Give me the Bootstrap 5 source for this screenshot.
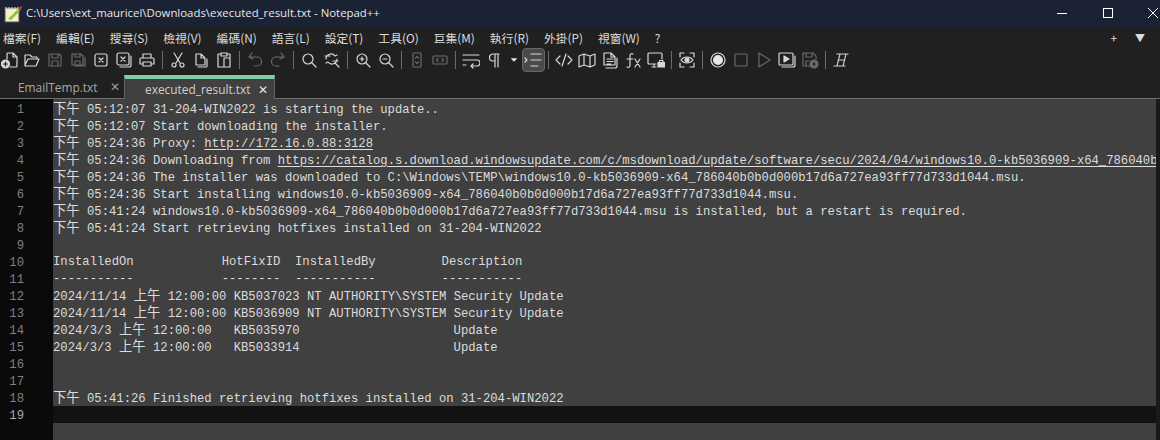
<!DOCTYPE html>
<html lang="zh-Hant"><head><meta charset="utf-8"><title>Notepad++</title>
<link href="https://cdn.jsdelivr.net/npm/bootstrap@5.3.0/dist/css/bootstrap.min.css" rel="stylesheet">
<style>
html,body{height:100%;overflow:hidden;background:#202020}
.np-app{width:1160px;height:440px;font-family:"Noto Sans CJK TC","Open Sans",sans-serif}
.np-title{height:28px;background:#1a2233;color:#e8e8e8;font:11.4px/24px "Open Sans","Noto Sans CJK TC",sans-serif;padding-bottom:3px}
.np-logo{width:26px;padding-left:3px;padding-top:2px}
.np-winbtns{margin-left:auto;margin-right:1px;gap:33.5px}
.np-menu{height:20px;background:#202020;color:#dcdcdc;font:11.8px/19px "Noto Sans CJK TC",sans-serif;padding-left:3px;gap:15px}
.np-plus{margin-right:3px}
.np-drop{margin-right:15px;font-size:10px}
.np-bar{height:24px;background:#202020}
.np-ico{width:23px;height:24px;display:flex;align-items:center;justify-content:center;flex:none}
.np-ico.first{width:20.5px}
.np-ico.caret{width:16px}
.np-ico.caret svg{width:10px}
.np-ico svg{width:18px;height:18px;fill:none;stroke:#d8d8d8;stroke-width:1.2;stroke-linecap:round;stroke-linejoin:round}
.np-ico.dim svg{stroke:#6a6a6a}
.np-ico.act{background:#4a4a4a;border:1px solid #666;border-radius:4px}
.np-ico.dash svg{stroke-dasharray:1.5 1}
.np-sep{width:1px;height:18px;background:#6a6a6a;margin:0 3.5px;flex:none}
.np-tabs{height:27px;background:#202020;border-bottom:1px solid #6e6e6e;padding-top:3px}
.np-tab{height:23px;width:124px;color:#a8a8a8;font:11.9px/24px "Open Sans",sans-serif;padding-left:18px;flex:none}
.np-tab.on{width:151px;background:#404040;border-top:4px solid #7ccfa9;border-left:1px solid #666;border-right:1px solid #666;color:#cfcfcf;height:24px;line-height:19px;padding-left:20px;padding-top:1px}
.np-x{font-size:12px;margin-left:auto;margin-right:4px;color:#9a9a9a}
.np-tab.on .np-x{color:#e6e6e6;margin-right:6px}
.np-ed{background:#404040;flex:1;min-height:0;overflow:hidden}
.np-gut{width:53px;background:#0a0a0a;color:#808080;flex:none;padding-top:1px}
.np-num{height:17px;font:12.2px/17px "Liberation Mono",monospace;text-align:right;padding-right:29px;padding-top:2px}
.np-num.cur{color:#aaa}
.np-lines{flex:1;min-width:0;overflow:hidden;color:#dcdcdc;padding-top:1px}
.np-ln{height:17px;padding-top:1px;white-space:pre;font:12.22px/17px "Liberation Mono","Noto Sans CJK TC",monospace}
.np-ln.cur{background:#121212}
.np-cjk{font-size:13.33px;font-family:"Noto Sans CJK TC",sans-serif;line-height:1}
.np-ln u{text-underline-offset:2px}
.np-strip{width:4px;background:#1a1a1a;flex:none}
</style></head><body>
<div class="np-app d-flex flex-column">
 <div class="np-title d-flex align-items-center">
  <div class="np-logo d-flex"><svg width="20" height="20" viewBox="0 0 20 20"><rect x="2" y="4" width="14" height="14" fill="#f4f1c8" stroke="#555"/><path d="M3 3v3M6 3v3M9 3v3M12 3v3M15 3v3" stroke="#ddd"/><path d="M5 15 15 5l2 2L8 16z" fill="#8fc23a"/><path d="M15 5l3-3 1 1-2 4z" fill="#d33"/></svg></div>
  <span>C:\Users\ext_mauricel\Downloads\executed_result.txt - Notepad++</span>
  <div class="np-winbtns d-flex">
   <svg width="12" height="12"><path d="M1 6.5h10" stroke="#fff"/></svg>
   <svg width="12" height="12"><rect x="1.500" y="1.500" width="9" height="9" fill="none" stroke="#fff"/></svg>
   <svg width="12" height="12"><path d="M1 1l10 10M11 1 1 11" stroke="#fff"/></svg>
  </div>
 </div>
 <div class="np-menu d-flex">
  <span>檔案(F)</span><span>編輯(E)</span><span>搜尋(S)</span><span>檢視(V)</span><span>編碼(N)</span><span>語言(L)</span><span>設定(T)</span><span>工具(O)</span><span>巨集(M)</span><span>執行(R)</span><span>外掛(P)</span><span>視窗(W)</span><span>?</span>
  <span class="ms-auto np-plus">+</span><span class="np-drop">▼</span>
 </div>
 <div class="np-bar d-flex align-items-center">
  <div class="np-ico first"><svg viewBox="0 0 18 18"><path d="M7 2h5l4 4v9a1 1 0 0 1-1 1H9M12 2v4h4M6 8V3a1 1 0 0 1 1-1"/><circle cx="4.500" cy="13" r="4" fill="#d8d8d8"/><path d="M2.500 13h4M4.500 11v4" stroke="#202020"/></svg></div>
  <div class="np-ico"><svg viewBox="0 0 18 18"><path d="M2 14V4h5l2 2h5v2M2 14l3-6h11l-3 7H2z"/></svg></div>
  <div class="np-ico dim"><svg viewBox="0 0 18 18"><path d="M3 3h10l2 2v10H3zM6 3v4h6V3M6 15v-5h6v5"/></svg></div>
  <div class="np-ico dim"><svg viewBox="0 0 18 18"><path d="M3 3h9l2 2v9H3zM6 3v3h5V3M6 14v-4h5v4M16 6v9h-10"/></svg></div>
  <div class="np-ico"><svg viewBox="0 0 18 18"><rect x="3" y="3" width="12" height="12" rx="2"/><path d="M7 7l4 4M11 7l-4 4"/></svg></div>
  <div class="np-ico"><svg viewBox="0 0 18 18"><rect x="2" y="2" width="12" height="12" rx="2"/><path d="M6 6l4 4M10 6l-4 4M16 5v9a2 2 0 0 1-2 2H5"/></svg></div>
  <div class="np-ico"><svg viewBox="0 0 18 18"><path d="M5 7V3h8v4M5 13H2V8a1 1 0 0 1 1-1h12a1 1 0 0 1 1 1v5h-3M5 11h8v4H5z"/></svg></div>
  <div class="np-sep"></div>
  <div class="np-ico"><svg viewBox="0 0 18 18"><path d="M5 2l6 10M13 2L7 12"/><circle cx="5" cy="14" r="2"/><circle cx="13" cy="14" r="2"/></svg></div>
  <div class="np-ico"><svg viewBox="0 0 18 18"><path d="M4 14V3h5l4 4v7zM9 3v4h4M15 8v7a1 1 0 0 1-1 1H6"/></svg></div>
  <div class="np-ico"><svg viewBox="0 0 18 18"><path d="M6 3H3v13h12V3h-3M6 2h6v3H6zM9 7h6v9H9z"/></svg></div>
  <div class="np-sep"></div>
  <div class="np-ico dim"><svg viewBox="0 0 18 18"><path d="M6 2 3 6l4 2M3 6h8a4 4 0 0 1 0 9H8"/></svg></div>
  <div class="np-ico dim"><svg viewBox="0 0 18 18"><path d="M12 2l3 4-4 2M15 6H7a4 4 0 0 0 0 9h3"/></svg></div>
  <div class="np-sep"></div>
  <div class="np-ico"><svg viewBox="0 0 18 18"><circle cx="8" cy="8" r="5"/><path d="M12 12l4 4"/></svg></div>
  <div class="np-ico"><svg viewBox="0 0 18 18"><path d="M3 8a5 5 0 0 1 9-3l2-1M14 8a5 5 0 0 1-9 3l-2 1M12 12l4 4M2 5h5M10 10h5"/></svg></div>
  <div class="np-sep"></div>
  <div class="np-ico"><svg viewBox="0 0 18 18"><circle cx="8" cy="8" r="5"/><path d="M12 12l4 4M6 8h4M8 6v4"/></svg></div>
  <div class="np-ico"><svg viewBox="0 0 18 18"><circle cx="8" cy="8" r="5"/><path d="M12 12l4 4M6 8h4"/></svg></div>
  <div class="np-sep"></div>
  <div class="np-ico dim"><svg viewBox="0 0 18 18"><rect x="5" y="2" width="8" height="14" rx="1"/><path d="M7.500 7 9 5.500 10.500 7M7.500 11 9 12.500 10.500 11"/></svg></div>
  <div class="np-ico dim"><svg viewBox="0 0 18 18"><rect x="2" y="5" width="14" height="8" rx="1"/><path d="M7 7.500 5.500 9 7 10.500M11 7.500 12.500 9 11 10.500"/></svg></div>
  <div class="np-sep"></div>
  <div class="np-ico"><svg viewBox="0 0 18 18"><path d="M1 4h16M1 9h14a2.500 2.500 0 0 1 0 6H9M11 13l-2 2 2 2M1 14h3"/></svg></div>
  <div class="np-ico"><svg viewBox="0 0 18 18"><path d="M14 3H8a3.500 3.500 0 0 0 0 7h2M10 3v13M13 3v13"/></svg></div>
  <div class="np-ico caret"><svg viewBox="0 0 18 18"><path d="M3 6h12L9 12z" fill="#e8e8e8" stroke="none"/></svg></div>
  <div class="np-ico act"><svg viewBox="0 0 18 18"><path d="M7 3h10M7 9h10M7 15h7M1 7l2 2-2 2"/></svg></div>
  <div class="np-sep"></div>
  <div class="np-ico"><svg viewBox="0 0 18 18"><path d="M5 5 1 9l4 4M13 5l4 4-4 4M11 3 7 15"/></svg></div>
  <div class="np-ico"><svg viewBox="0 0 18 18"><path d="M1 5l5-2 6 2 5-2v11l-5 2-6-2-5 2zM6 3v11M12 5v11"/></svg></div>
  <div class="np-ico"><svg viewBox="0 0 18 18"><path d="M3 2h7l4 4v8H3zM10 2v4h4M6 8h6M6 10.500h6M6 13h4M16 7v8a2 2 0 0 1-2 2H5"/></svg></div>
  <div class="np-ico"><svg viewBox="0 0 18 18"><path d="M9 3c-2-1-3 0-3 2v9c0 2-1 3-3 2M3 8h6M11 8l5 8M16 8l-5 8"/></svg></div>
  <div class="np-ico"><svg viewBox="0 0 18 18"><path d="M9 13H2a1 1 0 0 1-1-1V3a1 1 0 0 1 1-1h12a1 1 0 0 1 1 1v5M5 16h4M7 13v3"/><rect x="11" y="11.500" width="6.500" height="4.500" fill="#d8d8d8"/><path d="M12.500 11.500V9.500h3.500v2"/></svg></div>
  <div class="np-sep"></div>
  <div class="np-ico"><svg viewBox="0 0 18 18"><path d="M2 6V2h4M12 2h4v4M16 12v4h-4M6 16H2v-4M3 9c3-4 9-4 12 0-3 4-9 4-12 0z"/><circle cx="9" cy="9" r="2" fill="#d8d8d8"/></svg></div>
  <div class="np-sep"></div>
  <div class="np-ico"><svg viewBox="0 0 18 18"><circle cx="9" cy="9" r="7"/><circle cx="9" cy="9" r="4.500" fill="#e8e8e8"/></svg></div>
  <div class="np-ico dim"><svg viewBox="0 0 18 18"><rect x="3" y="3" width="12" height="12" rx="1"/></svg></div>
  <div class="np-ico dim"><svg viewBox="0 0 18 18"><path d="M4 2v14l11-7z"/></svg></div>
  <div class="np-ico"><svg viewBox="0 0 18 18"><rect x="1" y="2" width="14" height="12" rx="1"/><path d="M6 5v6l5-3z" fill="#d8d8d8"/><path d="M17 5v9a2 2 0 0 1-2 2H4"/></svg></div>
  <div class="np-ico dim"><svg viewBox="0 0 18 18"><path d="M9 15H2V2h10l3 3v3M5 2v4h6V2M5 15v-5h3"/><circle cx="13" cy="13" r="4" fill="#6a6a6a"/><path d="M12 11v4l3-2z" fill="#202020" stroke="none"/></svg></div>
  <div class="np-sep"></div>
  <div class="np-ico dash"><svg viewBox="0 0 18 18"><path d="M5 3h11M2 15h11M8 3 5 15M14 3l-3 12M6 9h6"/></svg></div>
 </div>
 <div class="np-tabs d-flex">
  <div class="np-tab d-flex">EmailTemp.txt<span class="np-x">✕</span></div>
  <div class="np-tab on d-flex">executed_result.txt<span class="np-x">✕</span></div>
 </div>
 <div class="np-ed d-flex">
  <div class="np-gut">
   <div class="np-num">1</div><div class="np-num">2</div><div class="np-num">3</div><div class="np-num">4</div><div class="np-num">5</div><div class="np-num">6</div><div class="np-num">7</div><div class="np-num">8</div><div class="np-num">9</div><div class="np-num">10</div><div class="np-num">11</div><div class="np-num">12</div><div class="np-num">13</div><div class="np-num">14</div><div class="np-num">15</div><div class="np-num">16</div><div class="np-num">17</div><div class="np-num">18</div><div class="np-num cur">19</div>
  </div>
  <div class="np-lines">
<div class="np-ln"><span class="np-cjk">下午</span> 05:12:07 31-204-WIN2022 is starting the update..</div>
<div class="np-ln"><span class="np-cjk">下午</span> 05:12:07 Start downloading the installer.</div>
<div class="np-ln"><span class="np-cjk">下午</span> 05:24:36 Proxy: <u>http://172.16.0.88:3128</u></div>
<div class="np-ln"><span class="np-cjk">下午</span> 05:24:36 Downloading from <u>https://catalog.s.download.windowsupdate.com/c/msdownload/update/software/secu/2024/04/windows10.0-kb5036909-x64_786040b0b0d000b17d6a727ea93ff77d733d1044.msu</u></div>
<div class="np-ln"><span class="np-cjk">下午</span> 05:24:36 The installer was downloaded to C:\Windows\TEMP\windows10.0-kb5036909-x64_786040b0b0d000b17d6a727ea93ff77d733d1044.msu.</div>
<div class="np-ln"><span class="np-cjk">下午</span> 05:24:36 Start installing windows10.0-kb5036909-x64_786040b0b0d000b17d6a727ea93ff77d733d1044.msu.</div>
<div class="np-ln"><span class="np-cjk">下午</span> 05:41:24 windows10.0-kb5036909-x64_786040b0b0d000b17d6a727ea93ff77d733d1044.msu is installed, but a restart is required.</div>
<div class="np-ln"><span class="np-cjk">下午</span> 05:41:24 Start retrieving hotfixes installed on 31-204-WIN2022</div>
<div class="np-ln"> </div>
<div class="np-ln">InstalledOn            HotFixID  InstalledBy         Description</div>
<div class="np-ln">-----------            --------  -----------         -----------</div>
<div class="np-ln">2024/11/14 <span class="np-cjk">上午</span> 12:00:00 KB5037023 NT AUTHORITY\SYSTEM Security Update</div>
<div class="np-ln">2024/11/14 <span class="np-cjk">上午</span> 12:00:00 KB5036909 NT AUTHORITY\SYSTEM Security Update</div>
<div class="np-ln">2024/3/3 <span class="np-cjk">上午</span> 12:00:00   KB5035970                     Update</div>
<div class="np-ln">2024/3/3 <span class="np-cjk">上午</span> 12:00:00   KB5033914                     Update</div>
<div class="np-ln"> </div>
<div class="np-ln"> </div>
<div class="np-ln"><span class="np-cjk">下午</span> 05:41:26 Finished retrieving hotfixes installed on 31-204-WIN2022</div>
<div class="np-ln cur"> </div>
  </div>
  <div class="np-strip"></div>
 </div>
</div>
</body></html>
